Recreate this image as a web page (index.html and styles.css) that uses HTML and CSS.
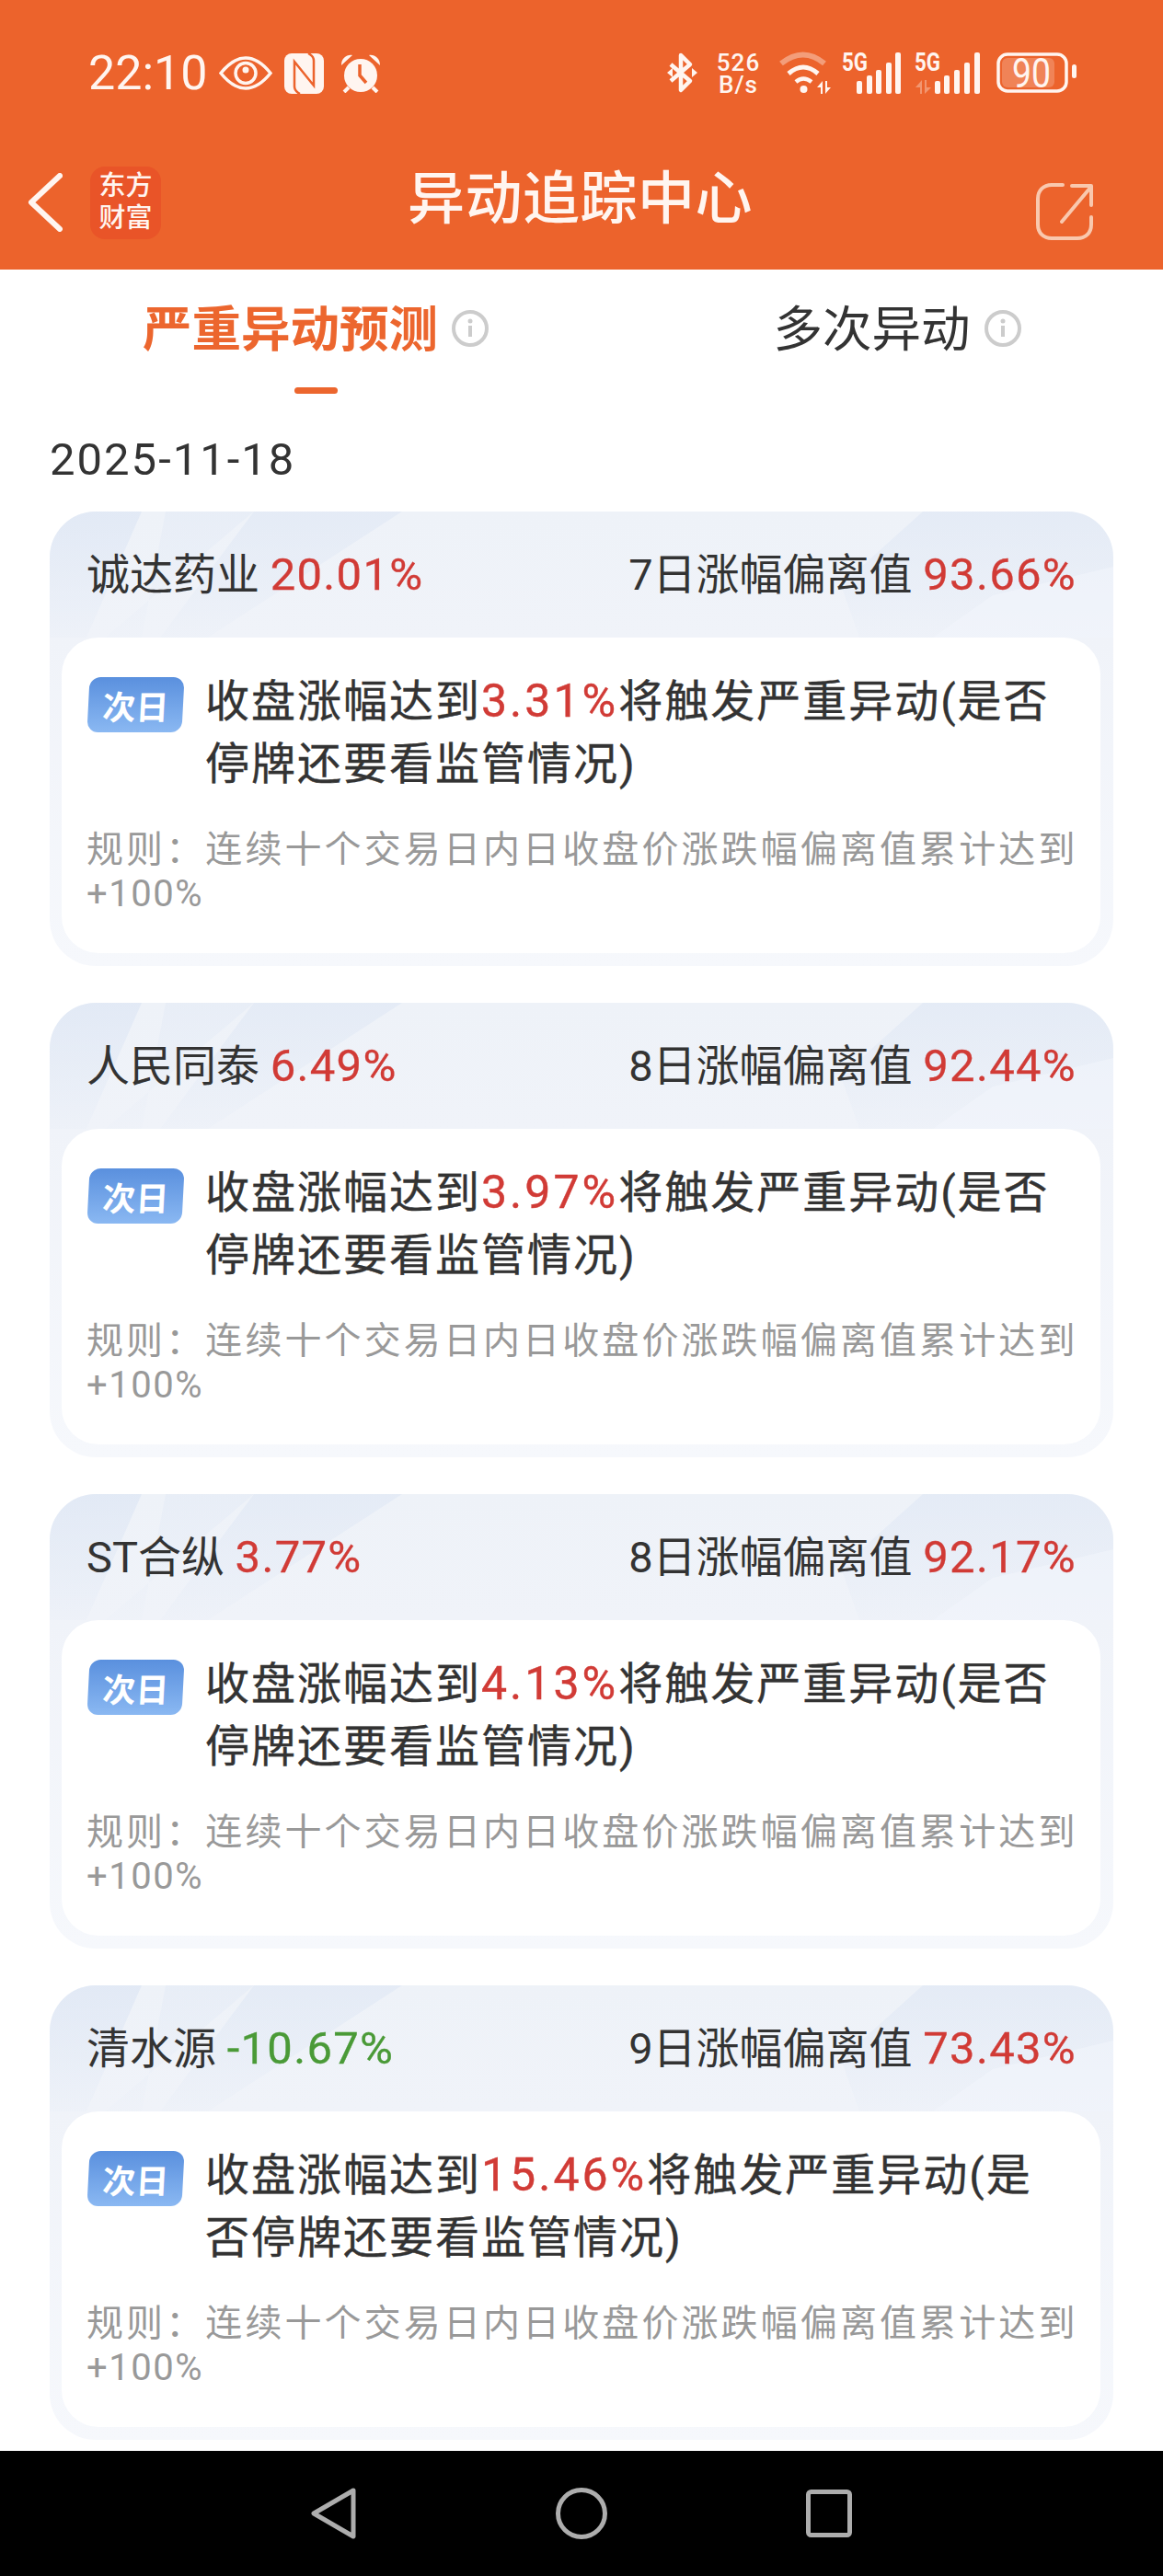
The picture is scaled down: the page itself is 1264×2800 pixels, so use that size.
FILE: index.html
```html
<!DOCTYPE html>
<html lang="zh">
<head>
    <meta charset="UTF-8">
    <title>异动追踪中心</title>
    <link rel="stylesheet" href="styles.css">
</head>
<body>
<svg class="defs" width="0" height="0">
    <defs>
        <linearGradient id="wedge" x1="0" y1="0" x2="0" y2="1">
            <stop offset="0" stop-color="#e0e8f5" stop-opacity=".85"/>
            <stop offset="1" stop-color="#e0e8f5" stop-opacity=".15"/>
        </linearGradient>
        <symbol id="card-pattern" viewBox="0 0 1156 494">
            <polygon points="0,0 100,0 40,137 0,137" fill="url(#wedge)"/>
            <polygon points="126,0 222,0 60,137 100,137" fill="url(#wedge)" opacity=".5"/>
            <polygon points="222,0 383,0 172,137 120,137" fill="url(#wedge)" opacity=".8"/>
            <polygon points="949,0 1156,0 1156,137 880,137 860,80" fill="url(#wedge)" opacity=".8"/>
            <polygon points="1025,91 1156,60 1156,137 960,137" fill="#f2f5fb" opacity=".6"/>
        </symbol>
    </defs>
</svg>

<div class="top">
    <div class="status">
        <div class="status-left">
            <span class="clock">22:10</span>
            <svg width="58" height="37" viewBox="0 0 58 37"><path d="M2 18.5C12 6 20 2 29 2s17 4 27 16.5C46 31 38 35 29 35S12 31 2 18.5Z" fill="none" stroke="#fff5f0" stroke-width="3.5"/><circle cx="29" cy="18.5" r="11" fill="none" stroke="#fff5f0" stroke-width="3.5"/><circle cx="29" cy="15" r="3.5" fill="#fff5f0"/></svg>
            <svg width="43" height="44" viewBox="0 0 43 44"><rect width="43" height="44" rx="8" fill="#fff5f0"/><path d="M17 44C13 42 11 40 11 36V9L32 35V8C32 4 30 2 26 0" fill="none" stroke="#ec632c" stroke-width="2.500"/></svg>
            <svg width="44" height="42" viewBox="0 0 44 42"><circle cx="22" cy="23" r="18" fill="#fff5f0"/><path d="M1 12C1 4 7 0 13 1ZM43 12C43 4 37 0 31 1Z" fill="#fff5f0"/><path d="M9 36l-5 5M35 36l5 5" stroke="#fff5f0" stroke-width="4"/><path d="M21 11v12l7 8" fill="none" stroke="#ec632c" stroke-width="3.500"/></svg>
        </div>
        <div class="status-right">
            <svg class="bt" width="33" height="44" viewBox="0 0 33 44"><path d="M4 13l21 18-10 10V3l10 10L4 31" fill="none" stroke="#fff5f0" stroke-width="4.5" stroke-linejoin="round"/><path d="M0 22l6-5v10ZM33 22l-6-5v10Z" fill="#fff5f0"/></svg>
            <div class="speed"><span>526</span><span class="speed-unit">B/s</span></div>
            <svg class="wifi" width="56" height="45" viewBox="0 0 56 45"><path d="M2 12Q26-7 49 12" fill="none" stroke="#fff5f0" stroke-opacity=".4" stroke-width="6"/><path d="M10 23Q26 9 42 23" fill="none" stroke="#fff5f0" stroke-width="5"/><path d="M18 32Q26 25 35 32" fill="none" stroke="#fff5f0" stroke-width="4.5"/><circle cx="26.500" cy="40" r="4" fill="#fff5f0"/><path d="M47 31l-6 7h4v7h2ZM50 31v14l6-7h-4v-7Z" fill="#fff5f0"/></svg>
            <svg class="sig-one" width="65" height="45" viewBox="0 0 65 45"><text class="sig-text" x="0" y="20" textLength="28" lengthAdjust="spacingAndGlyphs">5G</text><g fill="#fff5f0"><rect x="16" y="31" width="6" height="14" rx="2"/><rect x="27" y="25" width="6" height="20" rx="2"/><rect x="37" y="19" width="6" height="26" rx="2"/><rect x="48" y="11" width="6" height="34" rx="2"/><rect x="58" y="0" width="6" height="45" rx="2"/></g></svg>
            <svg class="sig-two" width="71" height="45" viewBox="0 0 71 45"><text class="sig-text" x="0" y="20" textLength="28" lengthAdjust="spacingAndGlyphs">5G</text><path d="M8 30l-7 8h5v7h2ZM11 30v15l7-7h-5v-8Z" fill="#fff5f0" fill-opacity=".35"/><g fill="#fff5f0"><rect x="22" y="31" width="6" height="14" rx="2"/><rect x="32" y="25" width="6" height="20" rx="2"/><rect x="43" y="19" width="6" height="26" rx="2"/><rect x="54" y="11" width="6" height="34" rx="2"/><rect x="65" y="0" width="6" height="45" rx="2"/></g></svg>
            <svg class="battery" width="87" height="44" viewBox="0 0 87 44"><rect x="2" y="2" width="74" height="40" rx="10" fill="none" stroke="#fff5f0" stroke-width="3.500"/><rect x="6" y="6" width="57" height="32" rx="6" fill="#fff5f0" fill-opacity=".22"/><text class="bat-text" x="17" y="38" textLength="42" lengthAdjust="spacingAndGlyphs">90</text><rect x="82" y="13" width="5" height="15" rx="2.500" fill="#fff5f0"/></svg>
        </div>
    </div>
    <div class="appbar">
        <svg class="back" width="38" height="64" viewBox="0 0 38 64"><path d="M35 3L4 32l31 29" fill="none" stroke="#fff5f0" stroke-width="6" stroke-linecap="round" stroke-linejoin="round"/></svg>
        <div class="logo"><span>东方</span><span>财富</span></div>
        <div class="title">异动追踪中心</div>
        <svg class="share" width="62" height="62" viewBox="0 0 62 62"><path d="M29 2H17C8 2 2 8 2 17v28c0 9 6 15 15 15h28c9 0 15-6 15-15V37M28 42L59 5M39 3h21v21" fill="none" stroke="#f9c8ae" stroke-width="4" stroke-linecap="round" stroke-linejoin="round"/></svg>
    </div>
</div>

<div class="main">
    <div class="tabs">
        <div class="tab">
            <div class="tab-label active">严重异动预测
                <svg width="40" height="40" viewBox="0 0 40 40"><circle cx="20" cy="20" r="18" fill="none" stroke="#ccc" stroke-width="4"/><circle cx="20" cy="12" r="2.500" fill="#ccc"/><rect x="18" y="17" width="4" height="12" fill="#ccc"/></svg>
            </div>
            <div class="tab-line"></div>
        </div>
        <div class="tab">
            <div class="tab-label">多次异动
                <svg width="40" height="40" viewBox="0 0 40 40"><circle cx="20" cy="20" r="18" fill="none" stroke="#ccc" stroke-width="4"/><circle cx="20" cy="12" r="2.500" fill="#ccc"/><rect x="18" y="17" width="4" height="12" fill="#ccc"/></svg>
            </div>
        </div>
    </div>

    <div class="date">2025-11-18</div>

    <div class="card">
        <svg class="card-bg"><use href="#card-pattern"/></svg>
        <div class="card-head">
            <div>诚达药业 <span class="num up">20.01%</span></div>
            <div>7日涨幅偏离值 <span class="num up">93.66%</span></div>
        </div>
        <div class="card-body">
            <div class="notice">
                <div class="badge"><span>次日</span></div>
                <div class="notice-text">收盘涨幅达到<span class="up">3.31%</span>将触发严重异动(是否停牌还要看监管情况)</div>
            </div>
            <div class="rule">规则：连续十个交易日内日收盘价涨跌幅偏离值累计达到<span class="rule-num">+100%</span></div>
        </div>
    </div>

    <div class="card">
        <svg class="card-bg"><use href="#card-pattern"/></svg>
        <div class="card-head">
            <div>人民同泰 <span class="num up">6.49%</span></div>
            <div>8日涨幅偏离值 <span class="num up">92.44%</span></div>
        </div>
        <div class="card-body">
            <div class="notice">
                <div class="badge"><span>次日</span></div>
                <div class="notice-text">收盘涨幅达到<span class="up">3.97%</span>将触发严重异动(是否停牌还要看监管情况)</div>
            </div>
            <div class="rule">规则：连续十个交易日内日收盘价涨跌幅偏离值累计达到<span class="rule-num">+100%</span></div>
        </div>
    </div>

    <div class="card">
        <svg class="card-bg"><use href="#card-pattern"/></svg>
        <div class="card-head">
            <div>ST合纵 <span class="num up">3.77%</span></div>
            <div>8日涨幅偏离值 <span class="num up">92.17%</span></div>
        </div>
        <div class="card-body">
            <div class="notice">
                <div class="badge"><span>次日</span></div>
                <div class="notice-text">收盘涨幅达到<span class="up">4.13%</span>将触发严重异动(是否停牌还要看监管情况)</div>
            </div>
            <div class="rule">规则：连续十个交易日内日收盘价涨跌幅偏离值累计达到<span class="rule-num">+100%</span></div>
        </div>
    </div>

    <div class="card">
        <svg class="card-bg"><use href="#card-pattern"/></svg>
        <div class="card-head">
            <div>清水源 <span class="num down">-10.67%</span></div>
            <div>9日涨幅偏离值 <span class="num up">73.43%</span></div>
        </div>
        <div class="card-body">
            <div class="notice">
                <div class="badge"><span>次日</span></div>
                <div class="notice-text">收盘涨幅达到<span class="up">15.46%</span>将触发严重异动(是否停牌还要看监管情况)</div>
            </div>
            <div class="rule">规则：连续十个交易日内日收盘价涨跌幅偏离值累计达到<span class="rule-num">+100%</span></div>
        </div>
    </div>
</div>

<div class="navbar">
    <svg width="50" height="56" viewBox="0 0 50 56"><path d="M46 3L3 28l43 25Z" fill="none" stroke="#adadad" stroke-width="5" stroke-linejoin="round"/></svg>
    <svg width="56" height="56" viewBox="0 0 56 56"><circle cx="28" cy="28" r="25.500" fill="none" stroke="#adadad" stroke-width="5"/></svg>
    <svg width="50" height="52" viewBox="0 0 50 52"><rect x="2.500" y="2.500" width="45" height="47" rx="3" fill="none" stroke="#adadad" stroke-width="5"/></svg>
</div>
</body>
</html>
```
FILE: styles.css
```css
html, body {
    margin: 0;
    padding: 0;
}
body {
    width: 1264px;
    height: 2800px;
    display: flex;
    flex-direction: column;
    overflow: hidden;
    background: #fff;
    color: #333;
    font-family: Roboto, "Noto Sans CJK SC", sans-serif;
}
.defs {
    display: block;
    height: 0;
}

/* orange head */
.top {
    height: 293px;
    flex: none;
    background: #ec632c;
    color: #fff5f0;
}
.status {
    height: 160px;
    box-sizing: border-box;
    padding: 57px 94px 0 96px;
    display: flex;
    justify-content: space-between;
    align-items: flex-start;
}
.status-left {
    display: flex;
    align-items: center;
    height: 45px;
}
.clock {
    font-size: 52px;
    line-height: 45px;
    margin-right: 12px;
}
.status-left svg + svg {
    margin-left: 13px;
}
.status-left svg:last-child {
    margin-left: 18px;
}
.status-right {
    display: flex;
    align-items: flex-start;
}
.status-right svg {
    overflow: visible;
}
.speed {
    width: 49px;
    margin-left: 20px;
    margin-top: -1px;
    display: flex;
    flex-direction: column;
    align-items: center;
    font-size: 26px;
    font-weight: 500;
    line-height: 24px;
    letter-spacing: 1px;
}
.wifi {
    margin-left: 20px;
}
.sig-one {
    margin-left: 12px;
}
.sig-two {
    margin-left: 14px;
}
.battery {
    margin-left: 18px;
}
.sig-text {
    font-size: 27px;
    font-weight: 700;
    fill: #fff5f0;
}
.bat-text {
    font-size: 44px;
    fill: #fff5f0;
}
.appbar {
    height: 133px;
    box-sizing: border-box;
    padding: 0 76px 13px 30px;
    display: flex;
    align-items: center;
}
.back {
    flex: none;
}
.logo {
    width: 77px;
    height: 79px;
    margin-left: 30px;
    flex: none;
    border-radius: 16px;
    background: #e95428;
    display: flex;
    flex-direction: column;
    align-items: center;
    justify-content: center;
    font-size: 29px;
    line-height: 35px;
    font-weight: 500;
}
.title {
    flex: 1;
    text-align: center;
    font-size: 62px;
    line-height: 80px;
    font-weight: 500;
    letter-spacing: .5px;
    padding: 0 40px 6px 0;
}
.share {
    flex: none;
    margin-top: 20px;
}

/* page body */
.main {
    flex: 1;
    min-height: 0;
    overflow: hidden;
}
.tabs {
    display: flex;
    height: 135px;
}
.tab {
    width: 50%;
    box-sizing: border-box;
    padding: 34px 0 0 54px;
    display: flex;
    flex-direction: column;
    align-items: center;
}
.tab-label {
    display: flex;
    align-items: center;
    gap: 15px;
    font-size: 53.500px;
    line-height: 64px;
    color: #333;
}
.tab-label svg {
    margin-top: -4px;
}
.tab-label.active {
    color: #ec662e;
    font-weight: 700;
}
.tab-line {
    width: 47px;
    height: 7px;
    margin-top: 30px;
    border-radius: 4px;
    background: #ec662e;
}
.date {
    margin: 44px 0 28px 54px;
    font-size: 49px;
    line-height: 56px;
    letter-spacing: 2px;
}

/* stock cards */
.card {
    position: relative;
    width: 1156px;
    height: 494px;
    box-sizing: border-box;
    margin: 0 54px 40px;
    padding: 0 14px 14px 13px;
    display: flex;
    flex-direction: column;
    border-radius: 50px;
    overflow: hidden;
    background: linear-gradient(180deg, #eef2f8 0, #f0f3f9 137px, #f6f8fc 100%);
}
.card-bg {
    position: absolute;
    left: 0;
    top: 0;
    width: 1156px;
    height: 494px;
}
.card-head {
    position: relative;
    height: 137px;
    flex: none;
    padding: 0 26px 0 27px;
    display: flex;
    justify-content: space-between;
    align-items: center;
    font-size: 47px;
    line-height: 60px;
}
.num {
    font-size: 49px;
    letter-spacing: 1.300px;
    -webkit-text-stroke: .3px currentColor;
}
.up {
    color: #d13b36;
}
.down {
    color: #4a9a37;
}
.card-body {
    position: relative;
    flex: 1;
    border-radius: 40px;
    background: #fff;
    padding: 35px 0 0 29px;
}
.notice {
    display: flex;
    gap: 24px;
    padding-right: 38px;
}
.badge {
    width: 103px;
    height: 60px;
    margin-top: 8px;
    flex: none;
    display: flex;
    align-items: center;
    justify-content: center;
    border-radius: 12px;
    transform: skewX(-3deg);
    background: linear-gradient(180deg, #5a90de, #8ab8f2);
    color: #fff;
    font-size: 36px;
    font-weight: 700;
}
.notice-text {
    font-size: 48px;
    line-height: 68px;
    letter-spacing: 2px;
    -webkit-text-stroke: .4px #333;
}
.notice-text .up {
    font-size: 50px;
    letter-spacing: 3px;
    -webkit-text-stroke: .4px #d13b36;
}
.rule {
    margin-top: 35px;
    margin-left: -2px;
    padding-right: 24px;
    font-size: 40px;
    line-height: 48px;
    letter-spacing: 3.100px;
    color: #999;
}
.rule-num {
    letter-spacing: 1.500px;
}

.navbar {
    height: 136px;
    flex: none;
    background: #000;
    display: flex;
    align-items: center;
    justify-content: center;
    gap: 216px;
}
```
